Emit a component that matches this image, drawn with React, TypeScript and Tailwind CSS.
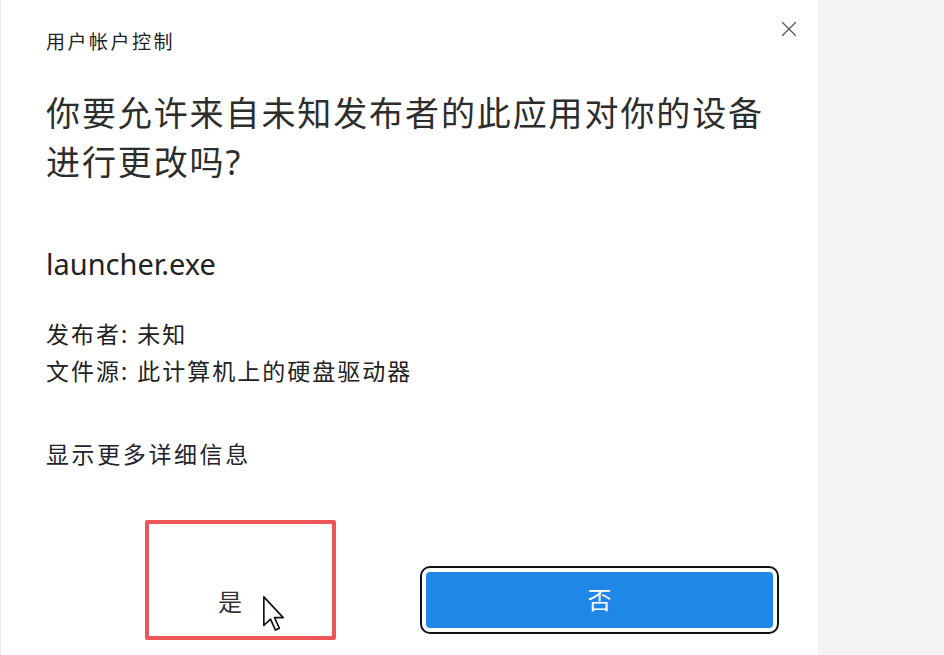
import { X } from "lucide-react";

const cjk = "font-['Noto_Sans','Noto_Sans_CJK_SC',sans-serif]";

// mouse pointer drawn over the "是" button
const Cursor = () => (
    <svg width="24" height="37" viewBox="0 0 13 20" className="absolute left-[113px] top-[71px]">
        <path d="M1 1 L1 16.5 L4.6 13 L7.3 19 L9.4 18 L6.8 12.2 L11.5 12.2 Z" fill="#fff" stroke="#111" strokeWidth="0.9" strokeLinejoin="round" />
    </svg>
);

const App = () => {
    return (
        <div className={`flex w-[944px] h-[655px] overflow-hidden text-[#1e1e1e] ${cjk}`}>
            {/* dialog */}
            <div className="relative w-[818px] h-full bg-white border-l border-[#ececec] pl-[45px]">
                <div className="flex justify-between items-start pt-[28px] pr-[12px]">
                    <h1 className="text-[19px] leading-[28px] tracking-[2.5px] text-[#222]">用户帐户控制</h1>
                    <button className="-mt-[16px] p-1 text-[#555]">
                        <X size={26} strokeWidth={1.1} />
                    </button>
                </div>

                <h2 className="mt-[33px] text-[34px] leading-[49px] tracking-[1.9px] text-[#2d2d2d] w-[730px]">
                    你要允许来自未知发布者的此应用对你的设备进行更改吗?
                </h2>

                <p className="mt-[59px] text-[29px] leading-[36px] font-['Noto_Sans',sans-serif] text-[#222]">launcher.exe</p>

                <div className="mt-[34px] text-[23px] leading-[37px] tracking-[2px] text-[#222]">
                    <p>发布者: 未知</p>
                    <p>文件源: 此计算机上的硬盘驱动器</p>
                </div>

                <a className="block mt-[46px] text-[23px] leading-[37px] tracking-[2.6px] text-[#1f2430]">显示更多详细信息</a>

                <div className="flex items-start mt-[47px]">
                    <div className="relative ml-[99px] w-[191px] h-[120px] border-[4px] border-[#eb5656] rounded-[2px]">
                        <span className="absolute left-[69px] top-[65px] text-[24px] leading-[26px] text-[#333]">是</span>
                        <Cursor />
                    </div>
                    <div className="ml-[84px] mt-[46px] w-[359px] h-[68px] rounded-[10px] border-[2.5px] border-[#111] p-[4px] bg-white">
                        <button className="w-full h-full rounded-[4px] bg-[#1f87e8] text-white text-[24px] leading-none flex items-center justify-center">
                            否
                        </button>
                    </div>
                </div>
            </div>

            {/* backdrop on the right */}
            <div className="flex-1 bg-[#f4f4f4]" />
        </div>
    );
};

export default App;
